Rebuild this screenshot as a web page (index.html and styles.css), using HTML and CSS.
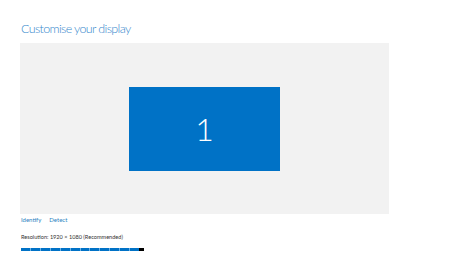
FILE: index.html
```html
<!DOCTYPE html>
<html>
<head><link rel="stylesheet" href="styles.css"></head>
<body>
<div class="page">
  <h1 class="title">Customise your display</h1>
  <div class="canvas">
    <div class="monitor">1</div>
  </div>
  <div class="links"><span>Identify</span><span>Detect</span></div>
  <div class="res">Resolution: 1920 × 1080 (Recommended)</div>
  <div class="slider">
    <div class="track"><i></i><i></i><i></i><i></i><i></i><i></i><i></i><i></i><i></i><i></i><i></i><i></i></div>
    <div class="thumb"></div>
  </div>
</div>
</body>
</html>
```
FILE: styles.css
```css
html, body { margin: 0; background: #fff; }
body { width: 474px; height: 265px; overflow: hidden; font-family: Lato, "Open Sans", sans-serif; }
.page { padding: 21px 0 0 21px; }
.title { margin: 0; font-size: 12.5px; font-weight: 300; color: #3487cc; line-height: 16px; letter-spacing: -0.65px; }
.canvas { margin: 6px 0 0 -1px; width: 369px; height: 171px; background: #f2f2f2; display: flex; justify-content: center; align-items: center; }
.monitor { width: 151px; height: 84px; background: #0072c6; color: #fff; font-size: 32px; font-weight: 300; display: flex; align-items: center; justify-content: center; }
.links { margin-top: 1px; display: flex; gap: 8px; font-size: 6px; color: #2c7fc1; line-height: 10px; }
.res { margin-top: 7px; font-size: 5.6px; color: #333; line-height: 10px; }
.slider { margin-top: 6px; display: flex; align-items: center; width: 123px; }
.track { display: flex; gap: 1px; height: 3px; flex: 1; background: #6fb2e8; }
.track i { flex: 1; background: #0072c6; }
.thumb { width: 5px; height: 3px; background: #000; }
```
